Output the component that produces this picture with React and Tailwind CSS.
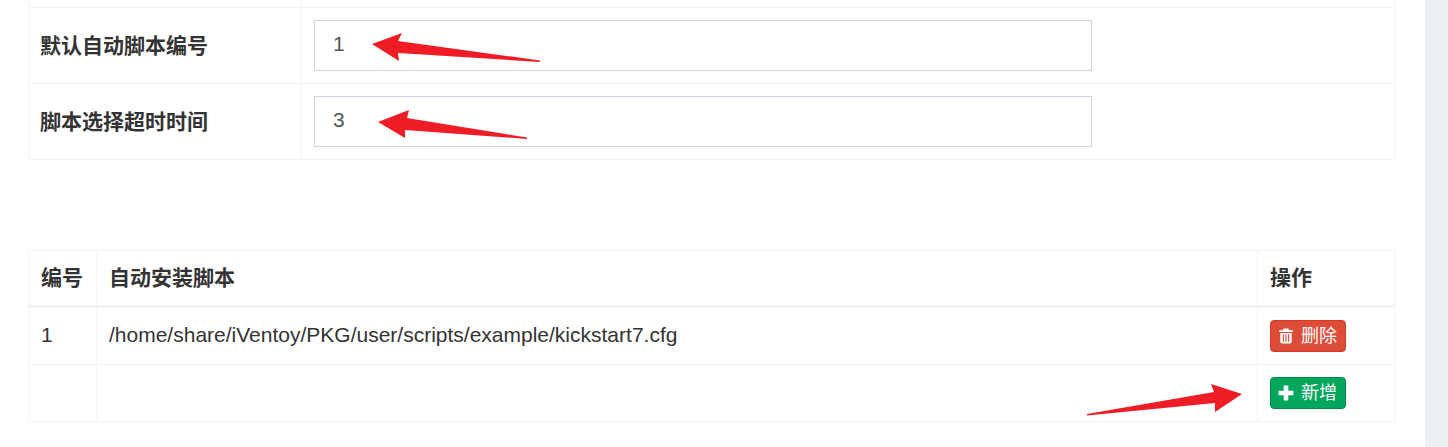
const font = { fontFamily: '"Liberation Sans", "Noto Sans CJK SC", sans-serif' };

function Arrow({ points }) {
  return <polygon points={points} fill="#ee1c25" />;
}

function TrashIcon() {
  return (
    <svg width="16" height="16" viewBox="0 0 14 14" className="shrink-0">
      <path fill="#fff" fillRule="evenodd" d="M5 .5h4l1 1.500h3V3.500H1V2h3zM2 4.300h10V12a1.600 1.600 0 0 1-1.600 1.600H3.600A1.600 1.600 0 0 1 2 12zM4.200 5.500v6.500h1V5.500zM6.500 5.500v6.500h1V5.500zM8.800 5.500v6.500h1V5.500z" />
    </svg>
  );
}

function PlusIcon() {
  return (
    <svg width="16" height="16" viewBox="0 0 14 14" className="shrink-0">
      <path fill="#fff" d="M5 .5h4V5h4.500v4H9v4.500H5V9H.5V5H5z" />
    </svg>
  );
}

function ActionButton({ color, border, icon, label }) {
  return (
    <button className={`flex h-8 w-[76px] items-center gap-[7px] rounded-[4px] border pl-[7px] text-[18px] leading-none text-white ${color} ${border}`}>
      {icon}
      <span>{label}</span>
    </button>
  );
}

const cell = "border border-[#f4f4f4] align-middle";

export default function App() {
  return (
    <div className="relative flex h-[447px] w-full overflow-hidden bg-white text-[#333]" style={font}>
      <main className="w-[1425px] shrink-0 pl-[28px] pr-[30px]">
        <table className="w-full table-fixed border-collapse text-[21px]">
          <colgroup>
            <col className="w-[273px]" />
            <col />
          </colgroup>
          <tbody>
            <tr className="h-[7px]">
              <td className="border border-t-0 border-[#f4f4f4]" />
              <td className="border border-t-0 border-[#f4f4f4]" />
            </tr>
            {[["默认自动脚本编号", "1"], ["脚本选择超时时间", "3"]].map(([name, value]) => (
              <tr key={name} className="h-[76px]">
                <td className={`${cell} pl-[11px] pt-[2px] font-bold`}>{name}</td>
                <td className={`${cell} pl-3`}>
                  <div className="flex h-[51px] w-[778px] items-center border border-[#ccd2de] pb-[2px] pl-[18px] text-[#555]">
                    {value}
                  </div>
                </td>
              </tr>
            ))}
          </tbody>
        </table>

        <table className="mt-[90px] w-full table-fixed border-collapse text-[21px]">
          <colgroup>
            <col className="w-[68px]" />
            <col />
            <col className="w-[137px]" />
          </colgroup>
          <thead>
            <tr className="h-[56px] font-bold">
              <th className="border border-b-[3px] border-[#f4f4f4] pl-3 text-left">编号</th>
              <th className="border border-b-[3px] border-[#f4f4f4] pl-3 text-left">自动安装脚本</th>
              <th className="border border-b-[3px] border-[#f4f4f4] pl-3 text-left">操作</th>
            </tr>
          </thead>
          <tbody>
            <tr className="h-[58px]">
              <td className={`${cell} pb-[2px] pl-3`}>1</td>
              <td className={`${cell} pb-[2px] pl-3`}>/home/share/iVentoy/PKG/user/scripts/example/kickstart7.cfg</td>
              <td className={`${cell} pl-3`}>
                <ActionButton color="bg-[#dd4b39]" border="border-[#d73925]" icon={<TrashIcon />} label="删除" />
              </td>
            </tr>
            <tr className="h-[57px]">
              <td className={cell} />
              <td className={cell} />
              <td className={`${cell} pl-3`}>
                <ActionButton color="bg-[#00a65a]" border="border-[#008d4c]" icon={<PlusIcon />} label="新增" />
              </td>
            </tr>
          </tbody>
        </table>
      </main>
      <aside className="flex-1 bg-[#ecf0f5]" />
      <svg className="pointer-events-none absolute inset-0" width="1448" height="447">
        <Arrow points="372,44 402,33 398,41 540,60.500 540,62 398,53 399,61" />
        <Arrow points="378,122 409,110 407,118 527,137.500 527,139 405,130 405,138" />
        <Arrow points="1242,394 1211,384 1214,392 1087,414 1087,415.500 1215,403 1215,412" />
      </svg>
    </div>
  );
}
